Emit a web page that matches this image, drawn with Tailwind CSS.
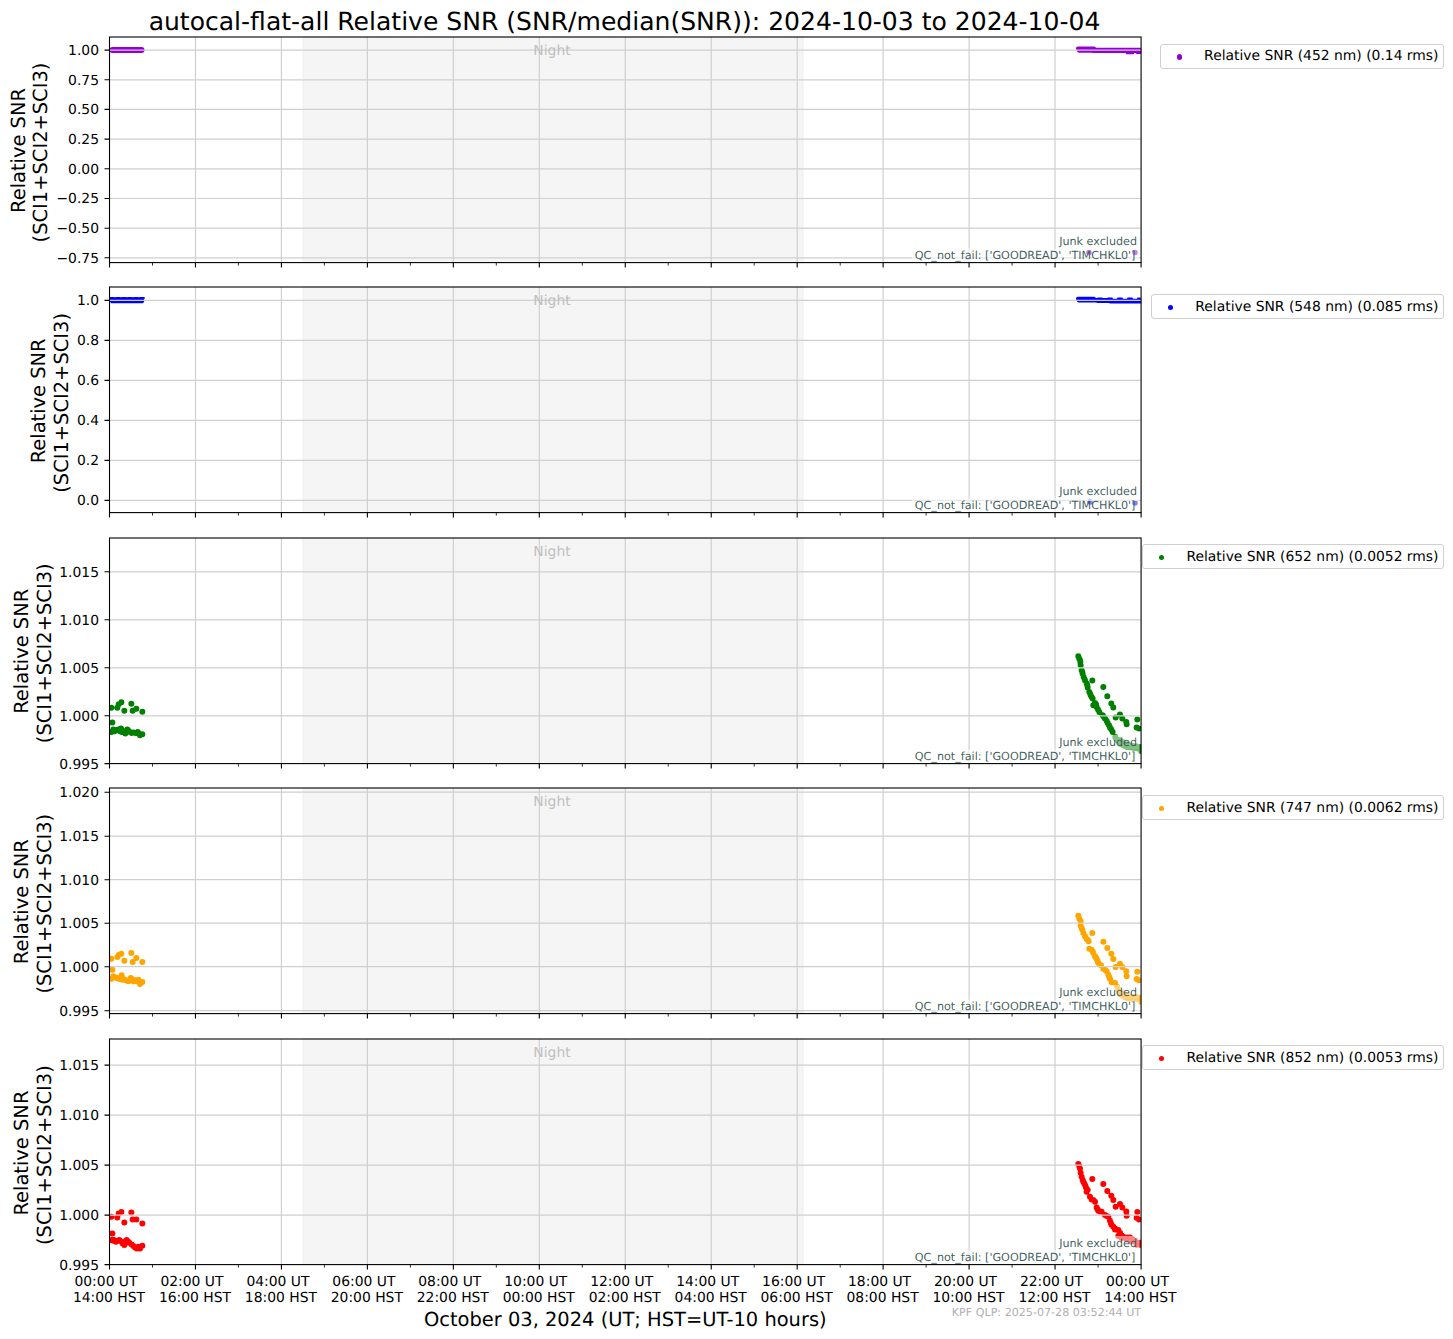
<!DOCTYPE html>
<html>
<head>
<meta charset="utf-8">
<script src="https://cdn.jsdelivr.net/npm/@tailwindcss/browser@4"></script>
</head>
<body class="bg-white">
<svg width="0" height="0" class="absolute">
  <defs>
    <rect id="shade" x="303" y="0" width="500" height="225.6" fill="#f5f5f5" stroke="#efefef" stroke-width="1"/>
    <path id="vgrid" d="M195.46 0V225.6M281.42 0V225.6M367.38 0V225.6M453.34 0V225.6M539.3 0V225.6M625.26 0V225.6M711.22 0V225.6M797.18 0V225.6M883.14 0V225.6M969.1 0V225.6M1055.06 0V225.6" stroke="#d0d0d0" stroke-width="1.2" fill="none"/>
    <g id="frame" fill="none" stroke="#000" stroke-width="1.1">
      <rect x="109.5" y="0" width="1031.6" height="225.6"/>
      <path d="M109.5 225.6v5M195.46 225.6v5M281.42 225.6v5M367.38 225.6v5M453.34 225.6v5M539.3 225.6v5M625.26 225.6v5M711.22 225.6v5M797.18 225.6v5M883.14 225.6v5M969.1 225.6v5M1055.06 225.6v5M1141.1 225.6v5"/>
      <path stroke-width=".8" d="M152.5 225.6v3M238.4 225.6v3M324.4 225.6v3M410.4 225.6v3M496.3 225.6v3M582.3 225.6v3M668.2 225.6v3M754.2 225.6v3M840.2 225.6v3M926.1 225.6v3M1012.1 225.6v3M1098.1 225.6v3"/>
    </g>
    <g id="boxes" fill="#fff" fill-opacity=".5">
      <rect x="1058" y="197" width="81.5" height="14.5"/>
      <rect x="912" y="211.5" width="227.5" height="13.5"/>
    </g>
    <clipPath id="c1"><rect x="109.5" y="36.5" width="1031.6" height="225.6"/></clipPath>
    <clipPath id="c2"><rect x="109.5" y="287.1" width="1031.6" height="225.6"/></clipPath>
    <clipPath id="c3"><rect x="109.5" y="537.7" width="1031.6" height="225.6"/></clipPath>
    <clipPath id="c4"><rect x="109.5" y="788.3" width="1031.6" height="225.6"/></clipPath>
    <clipPath id="c5"><rect x="109.5" y="1038.9" width="1031.6" height="225.6"/></clipPath>
  </defs>
</svg>

<main class="w-[1453px] h-[1339px] overflow-hidden font-['DejaVu_Sans','Liberation_Sans',sans-serif] text-black [text-rendering:geometricPrecision]">
  <h1 class="h-[32.5px] w-[1141px] pl-[108px] text-center text-[25.05px] leading-[43px] font-normal whitespace-nowrap">autocal-flat-all Relative SNR (SNR/median(SNR)): 2024-10-03 to 2024-10-04</h1>

  <div class="flex flex-col gap-[15px]">

    <!-- Panel 1 -->
    <section class="flex h-[235.6px]">
      <svg class="shrink-0 overflow-visible text-[13.89px]" width="1141.6" height="235.6" viewBox="0 32.5 1141.6 235.6" fill="#000">
        <use href="#shade" y="36.5"/>
        <g clip-path="url(#c1)" fill="none" stroke-linecap="round" stroke="#9400d3">
          <path stroke-width="6" d="M112.5 49.5H141.5"/>
          <path stroke-width="4" d="M1078 47.9H1094"/>
          <path stroke-width="5" d="M1079.5 49.7H1142"/>
          <path stroke-width="4" d="M1094 50.4H1142"/>
          <path stroke-width="2.5" d="M1127 52.4H1133M1137 52.2H1141"/>
          <path stroke-width="5.5" d="M1089 252h0M1135 252h0"/>
        </g>
        <use href="#vgrid" y="36.5"/>
        <path stroke="#d0d0d0" stroke-width="1.2" d="M109.5 49.6H1141M109.5 79.3H1141M109.5 108.9H1141M109.5 138.6H1141M109.5 168.3H1141M109.5 198H1141M109.5 227.7H1141M109.5 257.3H1141"/>
        <use href="#boxes" y="36.5"/>
        <text x="552" y="55" text-anchor="middle" fill="#bfbfbf">Night</text>
        <g class="text-[11.16px]" fill="#2f4f4f" fill-opacity=".92" text-anchor="end">
          <text x="1137" y="245">Junk excluded</text>
          <text x="1135.5" y="259">QC_not_fail: ['GOODREAD', 'TIMCHKL0']</text>
        </g>
        <use href="#frame" y="36.5"/>
        <path stroke="#000" stroke-width="1.1" d="M104.5 49.6h5M104.5 79.3h5M104.5 108.9h5M104.5 138.6h5M104.5 168.3h5M104.5 198h5M104.5 227.7h5M104.5 257.3h5"/>
        <g text-anchor="end">
          <text x="99" y="54.6">1.00</text><text x="99" y="84.3">0.75</text><text x="99" y="113.9">0.50</text><text x="99" y="143.6">0.25</text><text x="99" y="173.3">0.00</text><text x="99" y="203">−0.25</text><text x="99" y="232.7">−0.50</text><text x="99" y="262.3">−0.75</text>
        </g>
        <g class="text-[19.44px]" text-anchor="middle">
          <text transform="translate(24.5 150) rotate(-90)">Relative SNR</text>
          <text transform="translate(47 152) rotate(-90)">(SCI1+SCI2+SCI3)</text>
        </g>
      </svg>
      <div class="flex-1 flex justify-end items-start pt-[11px] pr-[9px]">
        <div class="flex items-center h-[25px] pl-[16px] pr-[4.5px] pt-[1.5px] bg-white border border-[#d0d0d0] rounded-[3px] text-[13.89px] whitespace-nowrap">
          <span class="w-[5.5px] h-[5.5px] rounded-full bg-[#9400d3] mr-[22px]"></span>Relative SNR (452 nm) (0.14 rms)
        </div>
      </div>
    </section>

    <!-- Panel 2 -->
    <section class="flex h-[235.6px]">
      <svg class="shrink-0 overflow-visible text-[13.89px]" width="1141.6" height="235.6" viewBox="0 283.1 1141.6 235.6" fill="#000">
        <use href="#shade" y="287.1"/>
        <g clip-path="url(#c2)" fill="none" stroke-linecap="round" stroke="#0000ff">
          <path stroke-width="5.6" d="M112.5 300.5H141.5"/>
          <path stroke-width="1.8" stroke-dasharray="4 2" d="M110 298H144"/>
          <path stroke-width="4" d="M1078 298.8H1094"/>
          <path stroke-width="4.6" d="M1079 300.4H1108"/>
          <path stroke-width="4.2" d="M1098 301H1142M1110 301.4H1142"/>
          <path stroke-width="1.8" stroke-dasharray="4 6" d="M1098 298.6H1140"/>
          <path stroke-width="5.5" d="M1090 502h0M1135 503h0"/>
        </g>
        <use href="#vgrid" y="287.1"/>
        <path stroke="#d0d0d0" stroke-width="1.2" d="M109.5 300.5H1141M109.5 340.5H1141M109.5 380.5H1141M109.5 420.5H1141M109.5 460.5H1141M109.5 500.5H1141"/>
        <use href="#boxes" y="287.1"/>
        <text x="552" y="305.6" text-anchor="middle" fill="#bfbfbf">Night</text>
        <g class="text-[11.16px]" fill="#2f4f4f" fill-opacity=".92" text-anchor="end">
          <text x="1137" y="495.6">Junk excluded</text>
          <text x="1135.5" y="509.6">QC_not_fail: ['GOODREAD', 'TIMCHKL0']</text>
        </g>
        <use href="#frame" y="287.1"/>
        <path stroke="#000" stroke-width="1.1" d="M104.5 300.5h5M104.5 340.5h5M104.5 380.5h5M104.5 420.5h5M104.5 460.5h5M104.5 500.5h5"/>
        <g text-anchor="end">
          <text x="99" y="305.5">1.0</text><text x="99" y="345.5">0.8</text><text x="99" y="385.5">0.6</text><text x="99" y="425.5">0.4</text><text x="99" y="465.5">0.2</text><text x="99" y="505.5">0.0</text>
        </g>
        <g class="text-[19.44px]" text-anchor="middle">
          <text transform="translate(45 401) rotate(-90)">Relative SNR</text>
          <text transform="translate(67.5 403) rotate(-90)">(SCI1+SCI2+SCI3)</text>
        </g>
      </svg>
      <div class="flex-1 flex justify-end items-start pt-[11.4px] pr-[9px]">
        <div class="flex items-center h-[25px] pl-[16px] pr-[4.5px] pt-[1.5px] bg-white border border-[#d0d0d0] rounded-[3px] text-[13.89px] whitespace-nowrap">
          <span class="w-[5.5px] h-[5.5px] rounded-full bg-[#0000ff] mr-[22px]"></span>Relative SNR (548 nm) (0.085 rms)
        </div>
      </div>
    </section>

    <!-- Panel 3 -->
    <section class="flex h-[235.6px]">
      <svg class="shrink-0 overflow-visible text-[13.89px]" width="1141.6" height="235.6" viewBox="0 533.7 1141.6 235.6" fill="#000">
        <use href="#shade" y="537.7"/>
        <g clip-path="url(#c3)" fill="none" stroke-linecap="round" stroke="#008000" stroke-width="18">
          <path transform="translate(90 680) scale(.3333)" d="M64 82h0M82 82h0M86 72h0M94 66h0M103 91h0M124 70h0M128 91h0M139 85h0M157 94h0M67 127h0M64 155h0M68 152h0M70 148h0M74 153h0M78 150h0M85 148h0M90 153h0M93 145h0M95 155h0M100 152h0M106 160h0M109 155h0M112 148h0M116 152h0M120 155h0M125 158h0M130 157h0M137 158h0M143 155h0M147 160h0M150 165h0M157 162h0"/>
          <path transform="translate(1040 630) scale(.3333)" d="M115 78h0M118 85h0M120 90h0M121 95h0M122 105h0M125 120h0M127 125h0M128 130h0M131 140h0M133 145h0M135 150h0M140 160h0M142 165h0M143 172h0M148 185h0M150 190h0M152 195h0M155 200h0M158 205h0M160 225h0M165 218h0M168 222h0M170 230h0M174 238h0M178 245h0M188 255h0M192 260h0M195 265h0M200 272h0M203 278h0M207 285h0M210 292h0M214 298h0M218 305h0M157 151h0M190 170h0M202 198h0M214 220h0M220 232h0M240 253h0M227 262h0M247 265h0M259 275h0M260 282h0M292 268h0M290 292h0M297 295h0M226 320h0M229 326h0M232 330h0M236 334h0M240 338h0M245 342h0M250 345h0M256 348h0M262 350h0M268 351h0M275 352h0M282 353h0M288 354h0M294 355h0M300 356h0M303 362h0M240 330h0M250 336h0M262 342h0M275 346h0M288 348h0M300 350h0"/>
        </g>
        <use href="#vgrid" y="537.7"/>
        <path stroke="#d0d0d0" stroke-width="1.2" d="M109.5 571.5H1141M109.5 619.5H1141M109.5 667.5H1141M109.5 715.5H1141"/>
        <use href="#boxes" y="537.7"/>
        <text x="552" y="556.2" text-anchor="middle" fill="#bfbfbf">Night</text>
        <g class="text-[11.16px]" fill="#2f4f4f" fill-opacity=".92" text-anchor="end">
          <text x="1137" y="746.2">Junk excluded</text>
          <text x="1135.5" y="760.2">QC_not_fail: ['GOODREAD', 'TIMCHKL0']</text>
        </g>
        <use href="#frame" y="537.7"/>
        <path stroke="#000" stroke-width="1.1" d="M104.5 571.5h5M104.5 619.5h5M104.5 667.5h5M104.5 715.5h5M104.5 763.3h5"/>
        <g text-anchor="end">
          <text x="99" y="576.5">1.015</text><text x="99" y="624.5">1.010</text><text x="99" y="672.5">1.005</text><text x="99" y="720.5">1.000</text><text x="99" y="768.5">0.995</text>
        </g>
        <g class="text-[19.44px]" text-anchor="middle">
          <text transform="translate(28 651) rotate(-90)">Relative SNR</text>
          <text transform="translate(50.5 653) rotate(-90)">(SCI1+SCI2+SCI3)</text>
        </g>
      </svg>
      <div class="flex-1 flex justify-end items-start pt-[10.8px] pr-[9px]">
        <div class="flex items-center h-[25px] pl-[16px] pr-[4.5px] pt-[1.5px] bg-white border border-[#d0d0d0] rounded-[3px] text-[13.89px] whitespace-nowrap">
          <span class="w-[5.5px] h-[5.5px] rounded-full bg-[#008000] mr-[22px]"></span>Relative SNR (652 nm) (0.0052 rms)
        </div>
      </div>
    </section>

    <!-- Panel 4 -->
    <section class="flex h-[235.6px]">
      <svg class="shrink-0 overflow-visible text-[13.89px]" width="1141.6" height="235.6" viewBox="0 784.3 1141.6 235.6" fill="#000">
        <use href="#shade" y="788.3"/>
        <g clip-path="url(#c4)" fill="none" stroke-linecap="round" stroke="#ffa500" stroke-width="18">
          <path transform="translate(90 940) scale(.3333)" d="M64 57h0M82 52h0M86 46h0M94 42h0M103 63h0M124 40h0M128 67h0M139 55h0M157 67h0M67 90h0M64 117h0M70 110h0M76 113h0M80 115h0M84 116h0M88 118h0M95 107h0M97 120h0M102 119h0M108 122h0M115 125h0M122 115h0M126 118h0M130 125h0M135 122h0M140 125h0M145 120h0M150 133h0M153 128h0M157 127h0"/>
          <path transform="translate(1040 900) scale(.3333)" d="M115 48h0M118 57h0M122 65h0M122 78h0M125 85h0M127 90h0M130 100h0M135 110h0M140 118h0M146 125h0M143 120h0M148 147h0M155 150h0M158 155h0M160 160h0M165 170h0M168 174h0M170 178h0M173 184h0M175 190h0M183 197h0M190 207h0M196 211h0M200 215h0M205 225h0M208 232h0M210 237h0M215 248h0M225 250h0M232 262h0M157 100h0M190 126h0M202 145h0M214 162h0M220 178h0M240 192h0M227 202h0M247 202h0M259 215h0M260 230h0M292 216h0M290 238h0M297 242h0M235 270h0M237 275h0M240 280h0M244 285h0M248 288h0M255 292h0M262 295h0M270 297h0M276 296h0M282 296h0M290 298h0M296 299h0M300 300h0M303 306h0M250 281h0M262 288h0M275 291h0M290 292h0M300 294h0"/>
        </g>
        <use href="#vgrid" y="788.3"/>
        <path stroke="#d0d0d0" stroke-width="1.2" d="M109.5 792.5H1141M109.5 836.5H1141M109.5 880H1141M109.5 923.5H1141M109.5 967H1141M109.5 1011H1141"/>
        <use href="#boxes" y="788.3"/>
        <text x="552" y="806.8" text-anchor="middle" fill="#bfbfbf">Night</text>
        <g class="text-[11.16px]" fill="#2f4f4f" fill-opacity=".92" text-anchor="end">
          <text x="1137" y="996.8">Junk excluded</text>
          <text x="1135.5" y="1010.8">QC_not_fail: ['GOODREAD', 'TIMCHKL0']</text>
        </g>
        <use href="#frame" y="788.3"/>
        <path stroke="#000" stroke-width="1.1" d="M104.5 792.5h5M104.5 836.5h5M104.5 880h5M104.5 923.5h5M104.5 967h5M104.5 1011h5"/>
        <g text-anchor="end">
          <text x="99" y="797.5">1.020</text><text x="99" y="841.5">1.015</text><text x="99" y="885">1.010</text><text x="99" y="928.5">1.005</text><text x="99" y="972">1.000</text><text x="99" y="1016">0.995</text>
        </g>
        <g class="text-[19.44px]" text-anchor="middle">
          <text transform="translate(28 902) rotate(-90)">Relative SNR</text>
          <text transform="translate(50.5 904) rotate(-90)">(SCI1+SCI2+SCI3)</text>
        </g>
      </svg>
      <div class="flex-1 flex justify-end items-start pt-[11.2px] pr-[9px]">
        <div class="flex items-center h-[25px] pl-[16px] pr-[4.5px] pt-[1.5px] bg-white border border-[#d0d0d0] rounded-[3px] text-[13.89px] whitespace-nowrap">
          <span class="w-[5.5px] h-[5.5px] rounded-full bg-[#ffa500] mr-[22px]"></span>Relative SNR (747 nm) (0.0062 rms)
        </div>
      </div>
    </section>

    <!-- Panel 5 -->
    <section class="flex h-[235.6px]">
      <svg class="shrink-0 overflow-visible text-[13.89px]" width="1141.6" height="235.6" viewBox="0 1034.9 1141.6 235.6" fill="#000">
        <use href="#shade" y="1038.9"/>
        <g clip-path="url(#c5)" fill="none" stroke-linecap="round" stroke="#ff0000" stroke-width="18">
          <path transform="translate(90 1190) scale(.3333)" d="M64 80h0M82 82h0M86 70h0M94 66h0M103 97h0M124 67h0M128 88h0M139 88h0M157 100h0M67 130h0M64 150h0M70 152h0M72 150h0M78 155h0M84 152h0M88 150h0M95 155h0M98 160h0M103 165h0M106 155h0M110 150h0M114 154h0M118 158h0M125 163h0M130 168h0M135 172h0M140 175h0M145 170h0M150 175h0M157 167h0"/>
          <path transform="translate(1040 1150) scale(.3333)" d="M115 42h0M118 48h0M120 55h0M122 68h0M125 80h0M128 90h0M130 95h0M133 100h0M136 106h0M138 112h0M143 120h0M140 125h0M150 140h0M155 148h0M160 150h0M165 155h0M170 172h0M173 178h0M175 182h0M180 184h0M185 185h0M195 195h0M200 198h0M205 200h0M210 212h0M213 220h0M215 225h0M220 230h0M225 235h0M230 238h0M235 240h0M240 248h0M225 238h0M157 87h0M190 102h0M202 123h0M214 137h0M220 150h0M240 162h0M227 170h0M247 172h0M259 184h0M260 197h0M292 186h0M290 203h0M297 208h0M235 258h0M240 257h0M245 256h0M250 260h0M255 262h0M262 262h0M270 262h0M274 265h0M278 268h0M285 272h0M290 278h0M295 282h0M300 278h0M303 285h0M245 264h0M260 268h0M275 274h0M290 284h0"/>
        </g>
        <use href="#vgrid" y="1038.9"/>
        <path stroke="#d0d0d0" stroke-width="1.2" d="M109.5 1065H1141M109.5 1115H1141M109.5 1165H1141M109.5 1215H1141"/>
        <use href="#boxes" y="1038.9"/>
        <text x="552" y="1057.4" text-anchor="middle" fill="#bfbfbf">Night</text>
        <g class="text-[11.16px]" fill="#2f4f4f" fill-opacity=".92" text-anchor="end">
          <text x="1137" y="1247.4">Junk excluded</text>
          <text x="1135.5" y="1261.4">QC_not_fail: ['GOODREAD', 'TIMCHKL0']</text>
        </g>
        <use href="#frame" y="1038.9"/>
        <path stroke="#000" stroke-width="1.1" d="M104.5 1065h5M104.5 1115h5M104.5 1165h5M104.5 1215h5M104.5 1264.5h5"/>
        <g text-anchor="end">
          <text x="99" y="1070">1.015</text><text x="99" y="1120">1.010</text><text x="99" y="1170">1.005</text><text x="99" y="1220">1.000</text><text x="99" y="1269.5">0.995</text>
        </g>
        <g class="text-[19.44px]" text-anchor="middle">
          <text transform="translate(28 1153) rotate(-90)">Relative SNR</text>
          <text transform="translate(50.5 1155) rotate(-90)">(SCI1+SCI2+SCI3)</text>
        </g>
      </svg>
      <div class="flex-1 flex justify-end items-start pt-[10.6px] pr-[9px]">
        <div class="flex items-center h-[25px] pl-[16px] pr-[4.5px] pt-[1.5px] bg-white border border-[#d0d0d0] rounded-[3px] text-[13.89px] whitespace-nowrap">
          <span class="w-[5.5px] h-[5.5px] rounded-full bg-[#ff0000] mr-[22px]"></span>Relative SNR (852 nm) (0.0053 rms)
        </div>
      </div>
    </section>
  </div>

  <!-- X tick labels -->
  <div class="flex pl-[66.02px] pt-[3.5px] text-[13.89px] leading-[16px] text-center whitespace-nowrap">
    <div class="w-[85.96px] shrink-0"><span class="inline-block pr-[6px]">00:00 UT</span><br>14:00 HST</div>
    <div class="w-[85.96px] shrink-0"><span class="inline-block pr-[6px]">02:00 UT</span><br>16:00 HST</div>
    <div class="w-[85.96px] shrink-0"><span class="inline-block pr-[6px]">04:00 UT</span><br>18:00 HST</div>
    <div class="w-[85.96px] shrink-0"><span class="inline-block pr-[6px]">06:00 UT</span><br>20:00 HST</div>
    <div class="w-[85.96px] shrink-0"><span class="inline-block pr-[6px]">08:00 UT</span><br>22:00 HST</div>
    <div class="w-[85.96px] shrink-0"><span class="inline-block pr-[6px]">10:00 UT</span><br>00:00 HST</div>
    <div class="w-[85.96px] shrink-0"><span class="inline-block pr-[6px]">12:00 UT</span><br>02:00 HST</div>
    <div class="w-[85.96px] shrink-0"><span class="inline-block pr-[6px]">14:00 UT</span><br>04:00 HST</div>
    <div class="w-[85.96px] shrink-0"><span class="inline-block pr-[6px]">16:00 UT</span><br>06:00 HST</div>
    <div class="w-[85.96px] shrink-0"><span class="inline-block pr-[6px]">18:00 UT</span><br>08:00 HST</div>
    <div class="w-[85.96px] shrink-0"><span class="inline-block pr-[6px]">20:00 UT</span><br>10:00 HST</div>
    <div class="w-[85.96px] shrink-0"><span class="inline-block pr-[6px]">22:00 UT</span><br>12:00 HST</div>
    <div class="w-[85.96px] shrink-0"><span class="inline-block pr-[6px]">00:00 UT</span><br>14:00 HST</div>
  </div>

  <!-- X axis label and stamp -->
  <div class="relative ml-[109.5px] w-[1031.6px] text-center text-[19.44px] leading-[24px] pt-[2px] whitespace-nowrap">
    October 03, 2024 (UT; HST=UT-10 hours)
    <span class="absolute right-0 top-0 text-[11.11px] leading-[14px] text-[#b0b0b0]">KPF QLP: 2025-07-28 03:52:44 UT</span>
  </div>
</main>
</body>
</html>
